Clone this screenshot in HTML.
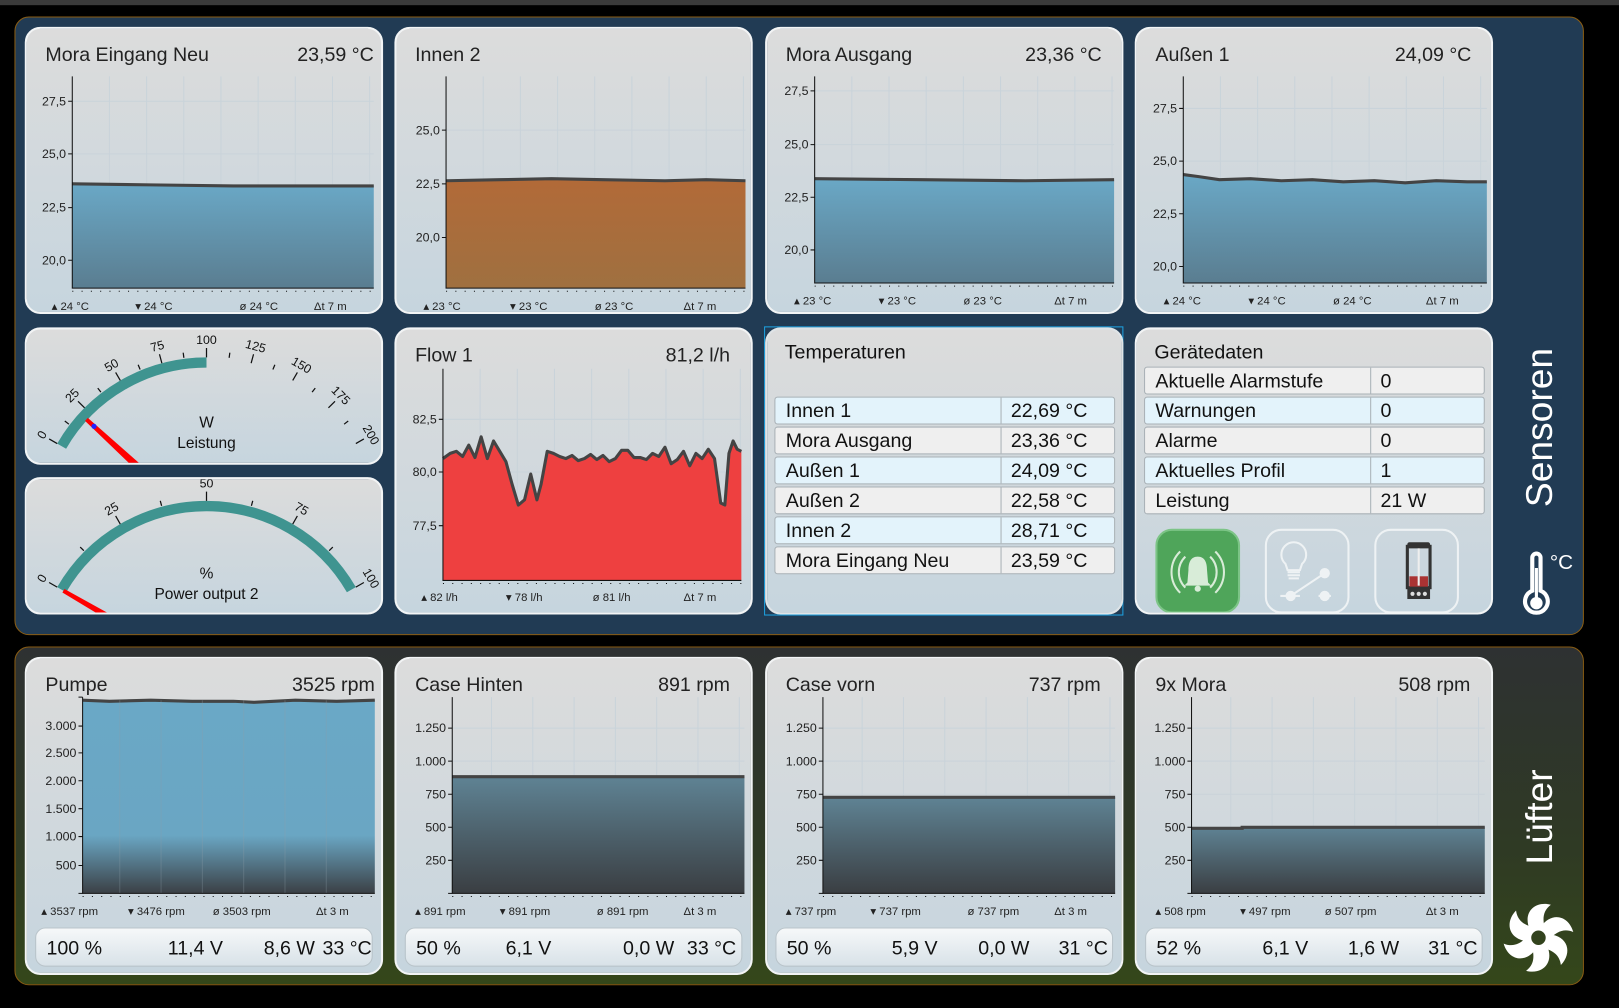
<!DOCTYPE html>
<html><head><meta charset="utf-8"><style>
html,body{margin:0;padding:0;background:#000;width:1619px;height:1008px;overflow:hidden}
#w{position:absolute;left:0;top:0;width:1568px;height:976px;transform:scale(1.03253,1.03279);transform-origin:0 0;font-family:"Liberation Sans",sans-serif;color:#111}
.topbar{position:absolute;left:0;top:0;width:1568px;height:5px;background:#3a3a3a}
.panel{position:absolute;left:14px;width:1518px;border:1px solid #8a5d14;border-radius:14px}
.card{position:absolute;width:343px;height:274px;border:2px solid #f2f4f5;border-radius:15px;background:linear-gradient(#dcdcdc,#c6d5de);overflow:hidden}
.card.lf{height:304px}
.card svg{position:absolute;left:0;top:0}
.t{position:absolute;font-size:19px;top:12px}
.bar{position:absolute;left:8px;top:260px;width:325px;height:36px;border:1px solid #b9c4ca;border-radius:10px;background:linear-gradient(#f6f8f9,#d8e2e8)}
.tbl{position:absolute;font-size:19px}
.row{position:absolute;height:27px;border:1px solid #a9b1b6;border-radius:3px;box-sizing:border-box}
.row span{position:absolute;top:3px}
.row i{position:absolute;top:0;bottom:0;width:1px;background:#a9b1b6}
.btn{position:absolute;top:193px;width:82px;height:82px;border:2px solid #eef2f4;border-radius:16px;box-sizing:border-box}
.vt{position:absolute;color:#fff;font-size:36px;transform:rotate(-90deg);transform-origin:center;white-space:nowrap}
</style></head><body><div id="w">
<div class="topbar"></div>
<div class="panel" style="top:16px;height:597px;background:#213b54"></div>
<div class="panel" style="top:626px;height:326px;background:linear-gradient(#2e3132,#2f3a24 60%,#34471a)"></div>

<svg width="0" height="0" style="position:absolute"><defs>
<linearGradient id="gb" x1="0" y1="0" x2="0" y2="1"><stop offset="0" stop-color="#6aa8c6"/><stop offset="1" stop-color="#5a7d90"/></linearGradient>
<linearGradient id="gbr" x1="0" y1="0" x2="0" y2="1"><stop offset="0" stop-color="#b26a38"/><stop offset="1" stop-color="#9f7040"/></linearGradient>
<linearGradient id="gp" x1="0" y1="0" x2="0" y2="1"><stop offset="0" stop-color="#6aa8c6"/><stop offset="0.7" stop-color="#6aa6c3"/><stop offset="1" stop-color="#3b4045"/></linearGradient>
<linearGradient id="gd" x1="0" y1="0" x2="0" y2="1"><stop offset="0" stop-color="#5f8394"/><stop offset="1" stop-color="#3a3e42"/></linearGradient>
</defs></svg>

<div class="card" style="left:24px;top:26px">
<svg width="347" height="278" font-size="12" fill="#222">
<g stroke="#c9d3da" stroke-width="1"><path d="M80 46V251M116 46V251M152 46V251M188 46V251M224 46V251M260 46V251M296 46V251M332 46V251M44 70H336M44 121H336M44 173H336M44 224H336"/></g>
<path d="M44 150L120 151L200 152L336 152L336 251L44 251Z" fill="url(#gb)"/>
<path d="M44 150L120 151L200 152L336 152" stroke="#444" stroke-width="3" fill="none"/>
<path d="M44 46V251H336" stroke="#111" fill="none"/><path d="M44 254H336" stroke="#111" stroke-dasharray="1 8"/>
<g stroke="#111"><path d="M40 70H44M40 121H44M40 173H44M40 224H44"/></g>
<text x="38" y="74" text-anchor="end">27,5</text><text x="38" y="125" text-anchor="end">25,0</text><text x="38" y="177" text-anchor="end">22,5</text><text x="38" y="228" text-anchor="end">20,0</text>
<text x="24" y="272" font-size="11">▴ 24 °C</text><text x="105" y="272" font-size="11">▾ 24 °C</text><text x="206" y="272" font-size="11">ø 24 °C</text><text x="278" y="272" font-size="11">Δt 7 m</text>
<text x="18" y="31" font-size="19">Mora Eingang Neu</text><text x="336" y="31" font-size="19" text-anchor="end">23,59 °C</text>
</svg></div>

<div class="card" style="left:382px;top:26px">
<svg width="347" height="278" font-size="12" fill="#222">
<g stroke="#c9d3da"><path d="M84 46V251M120 46V251M156 46V251M192 46V251M228 46V251M264 46V251M300 46V251M336 46V251M48 98H338M48 150H338M48 202H338"/></g>
<path d="M48 147L100 146L150 145L200 146L260 147L300 146L338 147L338 251L48 251Z" fill="url(#gbr)"/>
<path d="M48 147L100 146L150 145L200 146L260 147L300 146L338 147" stroke="#444" stroke-width="3" fill="none"/>
<path d="M48 46V251H338" stroke="#111" fill="none"/><path d="M48 254H338" stroke="#111" stroke-dasharray="1 8"/>
<g stroke="#111"><path d="M44 98H48M44 150H48M44 202H48"/></g>
<text x="42" y="102" text-anchor="end">25,0</text><text x="42" y="154" text-anchor="end">22,5</text><text x="42" y="206" text-anchor="end">20,0</text>
<text x="26" y="272" font-size="11">▴ 23 °C</text><text x="110" y="272" font-size="11">▾ 23 °C</text><text x="192" y="272" font-size="11">ø 23 °C</text><text x="278" y="272" font-size="11">Δt 7 m</text>
<text x="18" y="31" font-size="19">Innen 2</text>
</svg></div>

<div class="card" style="left:741px;top:26px">
<svg width="347" height="278" font-size="12" fill="#222">
<g stroke="#c9d3da"><path d="M82 46V246M118 46V246M154 46V246M190 46V246M226 46V246M262 46V246M298 46V246M334 46V246M46 60H336M46 112H336M46 163H336M46 214H336"/></g>
<path d="M46 145L150 146L250 147L336 146L336 246L46 246Z" fill="url(#gb)"/>
<path d="M46 145L150 146L250 147L336 146" stroke="#444" stroke-width="3" fill="none"/>
<path d="M46 46V246H336" stroke="#111" fill="none"/><path d="M46 249H336" stroke="#111" stroke-dasharray="1 8"/>
<g stroke="#111"><path d="M42 60H46M42 112H46M42 163H46M42 214H46"/></g>
<text x="40" y="64" text-anchor="end">27,5</text><text x="40" y="116" text-anchor="end">25,0</text><text x="40" y="167" text-anchor="end">22,5</text><text x="40" y="218" text-anchor="end">20,0</text>
<text x="26" y="267" font-size="11">▴ 23 °C</text><text x="108" y="267" font-size="11">▾ 23 °C</text><text x="190" y="267" font-size="11">ø 23 °C</text><text x="278" y="267" font-size="11">Δt 7 m</text>
<text x="18" y="31" font-size="19">Mora Ausgang</text><text x="324" y="31" font-size="19" text-anchor="end">23,36 °C</text>
</svg></div>

<div class="card" style="left:1099px;top:26px">
<svg width="347" height="278" font-size="12" fill="#222">
<g stroke="#c9d3da"><path d="M81 46V246M117 46V246M153 46V246M189 46V246M225 46V246M261 46V246M297 46V246M333 46V246M45 77H339M45 128H339M45 179H339M45 230H339"/></g>
<path d="M45 141L60 143L80 146L110 145L140 147L170 146L200 148L230 147L260 149L290 147L320 148L339 148L339 246L45 246Z" fill="url(#gb)"/>
<path d="M45 141L60 143L80 146L110 145L140 147L170 146L200 148L230 147L260 149L290 147L320 148L339 148" stroke="#444" stroke-width="3" fill="none"/>
<path d="M45 46V246H339" stroke="#111" fill="none"/><path d="M45 249H339" stroke="#111" stroke-dasharray="1 8"/>
<g stroke="#111"><path d="M41 77H45M41 128H45M41 179H45M41 230H45"/></g>
<text x="39" y="81" text-anchor="end">27,5</text><text x="39" y="132" text-anchor="end">25,0</text><text x="39" y="183" text-anchor="end">22,5</text><text x="39" y="234" text-anchor="end">20,0</text>
<text x="26" y="267" font-size="11">▴ 24 °C</text><text x="108" y="267" font-size="11">▾ 24 °C</text><text x="190" y="267" font-size="11">ø 24 °C</text><text x="280" y="267" font-size="11">Δt 7 m</text>
<text x="18" y="31" font-size="19">Außen 1</text><text x="324" y="31" font-size="19" text-anchor="end">24,09 °C</text>
</svg></div>

<div class="card" style="left:24px;top:317px;height:129px">
<svg width="347" height="133" fill="#111" font-size="12">
<path d="M33.7 113A162 162 0 0 1 174 32" stroke="#3f9490" stroke-width="10" fill="none"/>
<g stroke="#111" stroke-width="1.2">
<line x1="174" y1="27" x2="174" y2="18" transform="rotate(-60 174 194)"/><line x1="174" y1="27" x2="174" y2="18" transform="rotate(-45 174 194)"/><line x1="174" y1="27" x2="174" y2="18" transform="rotate(-30 174 194)"/><line x1="174" y1="27" x2="174" y2="18" transform="rotate(-15 174 194)"/><line x1="174" y1="27" x2="174" y2="18"/><line x1="174" y1="27" x2="174" y2="18" transform="rotate(15 174 194)"/><line x1="174" y1="27" x2="174" y2="18" transform="rotate(30 174 194)"/><line x1="174" y1="27" x2="174" y2="18" transform="rotate(45 174 194)"/><line x1="174" y1="27" x2="174" y2="18" transform="rotate(60 174 194)"/>
<line x1="174" y1="26" x2="174" y2="21" transform="rotate(-52.5 174 194)"/><line x1="174" y1="26" x2="174" y2="21" transform="rotate(-37.5 174 194)"/><line x1="174" y1="26" x2="174" y2="21" transform="rotate(-22.5 174 194)"/><line x1="174" y1="26" x2="174" y2="21" transform="rotate(-7.5 174 194)"/><line x1="174" y1="26" x2="174" y2="21" transform="rotate(7.5 174 194)"/><line x1="174" y1="26" x2="174" y2="21" transform="rotate(22.5 174 194)"/><line x1="174" y1="26" x2="174" y2="21" transform="rotate(37.5 174 194)"/><line x1="174" y1="26" x2="174" y2="21" transform="rotate(52.5 174 194)"/>
</g>
<g text-anchor="middle">
<text x="174" y="14" transform="rotate(-60 174 194)">0</text><text x="174" y="14" transform="rotate(-45 174 194)">25</text><text x="174" y="14" transform="rotate(-30 174 194)">50</text><text x="174" y="14" transform="rotate(-15 174 194)">75</text><text x="174" y="14">100</text><text x="174" y="14" transform="rotate(15 174 194)">125</text><text x="174" y="14" transform="rotate(30 174 194)">150</text><text x="174" y="14" transform="rotate(45 174 194)">175</text><text x="174" y="14" transform="rotate(60 174 194)">200</text>
</g>
<polygon points="172,36 176,36 178,130 170,130" fill="#f00" transform="rotate(-47.4 174 194)"/>
<circle cx="174" cy="46" r="2.5" fill="#22f" transform="rotate(-47.4 174 194)"/>
<text x="174" y="95" text-anchor="middle" font-size="15">W</text><text x="174" y="115" text-anchor="middle" font-size="15">Leistung</text>
</svg></div>

<div class="card" style="left:24px;top:462px;height:129px">
<svg width="347" height="133" fill="#111" font-size="12">
<path d="M33.7 107A162 162 0 0 1 314.3 107" stroke="#3f9490" stroke-width="10" fill="none"/>
<g stroke="#111" stroke-width="1.2">
<line x1="174" y1="21" x2="174" y2="12" transform="rotate(-60 174 188)"/><line x1="174" y1="21" x2="174" y2="12" transform="rotate(-30 174 188)"/><line x1="174" y1="21" x2="174" y2="12"/><line x1="174" y1="21" x2="174" y2="12" transform="rotate(30 174 188)"/><line x1="174" y1="21" x2="174" y2="12" transform="rotate(60 174 188)"/>
<line x1="174" y1="20" x2="174" y2="15" transform="rotate(-45 174 188)"/><line x1="174" y1="20" x2="174" y2="15" transform="rotate(-15 174 188)"/><line x1="174" y1="20" x2="174" y2="15" transform="rotate(15 174 188)"/><line x1="174" y1="20" x2="174" y2="15" transform="rotate(45 174 188)"/>
</g>
<g text-anchor="middle">
<text x="174" y="8" transform="rotate(-60 174 188)">0</text><text x="174" y="8" transform="rotate(-30 174 188)">25</text><text x="174" y="8">50</text><text x="174" y="8" transform="rotate(30 174 188)">75</text><text x="174" y="8" transform="rotate(60 174 188)">100</text>
</g>
<polygon points="172,28 176,28 178,140 170,140" fill="#f00" transform="rotate(-60 174 188)"/>
<text x="174" y="96" text-anchor="middle" font-size="15">%</text><text x="174" y="116" text-anchor="middle" font-size="15">Power output 2</text>
</svg></div>

<div class="card" style="left:382px;top:317px">
<svg width="347" height="278" font-size="12" fill="#222">
<g stroke="#c9d3da"><path d="M81 38V243M117 38V243M153 38V243M189 38V243M225 38V243M261 38V243M297 38V243M333 38V243M45 87H334M45 138H334M45 190H334"/></g>
<path d="M45 125L52 120L58 118L64 123L70 112L76 124L82 104L88 125L94 108L100 118L106 128L112 150L118 170L124 165L130 140L136 165L140 150L146 118L152 120L158 123L164 125L170 122L176 127L182 125L188 121L194 126L200 122L206 128L212 125L218 117L224 117L230 124L236 124L242 126L248 120L254 123L260 114L266 130L272 126L278 118L284 132L290 120L296 125L302 116L308 125L314 168L318 170L322 120L326 108L330 116L334 118L334 243L45 243Z" fill="#ee4040"/>
<path d="M45 125L52 120L58 118L64 123L70 112L76 124L82 104L88 125L94 108L100 118L106 128L112 150L118 170L124 165L130 140L136 165L140 150L146 118L152 120L158 123L164 125L170 122L176 127L182 125L188 121L194 126L200 122L206 128L212 125L218 117L224 117L230 124L236 124L242 126L248 120L254 123L260 114L266 130L272 126L278 118L284 132L290 120L296 125L302 116L308 125L314 168L318 170L322 120L326 108L330 116L334 118" stroke="#444" stroke-width="3" fill="none" stroke-linejoin="round"/>
<path d="M45 38V243H334" stroke="#111" fill="none"/><path d="M45 246H334" stroke="#111" stroke-dasharray="1 8"/>
<g stroke="#111"><path d="M41 87H45M41 138H45M41 190H45"/></g>
<text x="39" y="91" text-anchor="end">82,5</text><text x="39" y="142" text-anchor="end">80,0</text><text x="39" y="194" text-anchor="end">77,5</text>
<text x="24" y="263" font-size="11">▴ 82 l/h</text><text x="106" y="263" font-size="11">▾ 78 l/h</text><text x="190" y="263" font-size="11">ø 81 l/h</text><text x="278" y="263" font-size="11">Δt 7 m</text>
<text x="18" y="31" font-size="19">Flow 1</text><text x="323" y="31" font-size="19" text-anchor="end">81,2 l/h</text>
</svg></div>

<div style="position:absolute;left:740px;top:316px;width:346px;height:278px;border:1px solid #1da1e0"></div>
<div class="card" style="left:741px;top:317px;border-color:#dfe4e7">
<div class="t" style="left:17px">Temperaturen</div>
<div class="tbl">
<div class="row" style="left:7px;top:65px;width:330px;background:#e3f3fb"><span style="left:10px">Innen 1</span><i style="left:218px"></i><span style="left:228px">22,69 °C</span></div>
<div class="row" style="left:7px;top:94px;width:330px;background:#efefef"><span style="left:10px">Mora Ausgang</span><i style="left:218px"></i><span style="left:228px">23,36 °C</span></div>
<div class="row" style="left:7px;top:123px;width:330px;background:#e3f3fb"><span style="left:10px">Außen 1</span><i style="left:218px"></i><span style="left:228px">24,09 °C</span></div>
<div class="row" style="left:7px;top:152px;width:330px;background:#efefef"><span style="left:10px">Außen 2</span><i style="left:218px"></i><span style="left:228px">22,58 °C</span></div>
<div class="row" style="left:7px;top:181px;width:330px;background:#e3f3fb"><span style="left:10px">Innen 2</span><i style="left:218px"></i><span style="left:228px">28,71 °C</span></div>
<div class="row" style="left:7px;top:210px;width:330px;background:#efefef"><span style="left:10px">Mora Eingang Neu</span><i style="left:218px"></i><span style="left:228px">23,59 °C</span></div>
</div></div>

<div class="card" style="left:1099px;top:317px">
<div class="t" style="left:17px">Gerätedaten</div>
<div class="tbl">
<div class="row" style="left:7px;top:36px;width:330px;background:#efefef"><span style="left:10px">Aktuelle Alarmstufe</span><i style="left:218px"></i><span style="left:228px">0</span></div>
<div class="row" style="left:7px;top:65px;width:330px;background:#e3f3fb"><span style="left:10px">Warnungen</span><i style="left:218px"></i><span style="left:228px">0</span></div>
<div class="row" style="left:7px;top:94px;width:330px;background:#efefef"><span style="left:10px">Alarme</span><i style="left:218px"></i><span style="left:228px">0</span></div>
<div class="row" style="left:7px;top:123px;width:330px;background:#e3f3fb"><span style="left:10px">Aktuelles Profil</span><i style="left:218px"></i><span style="left:228px">1</span></div>
<div class="row" style="left:7px;top:152px;width:330px;background:#efefef"><span style="left:10px">Leistung</span><i style="left:218px"></i><span style="left:228px">21 W</span></div>
</div>
<div class="btn" style="left:18px;background:#4fa55a;border-color:#7cc486">
<svg width="82" height="82" style="left:-2px;top:-2px"><g fill="none" stroke="#d8ecd8" stroke-width="2"><path d="M24 22A28 28 0 0 0 24 62M58 22A28 28 0 0 1 58 62M29 27A21 21 0 0 0 29 57M53 27A21 21 0 0 1 53 57"/></g><path d="M41 27C34 27 32 33 32 40L31 52L28 55H54L51 52L50 40C50 33 48 27 41 27Z" fill="#d8ecd8"/><circle cx="41" cy="58" r="3" fill="#d8ecd8"/></svg></div>
<div class="btn" style="left:124px">
<svg width="82" height="82" style="left:-2px;top:-2px" fill="none" stroke="#eef2f4" stroke-width="2"><path d="M20 34A12 12 0 1 1 36 34L34 40H22Z"/><path d="M22 42H34M22 45H34M23 48H33"/><path d="M25 65L58 43M15 65H34M52 65H64"/><circle cx="25" cy="65" r="4" fill="#eef2f4"/><circle cx="58" cy="43" r="4" fill="#eef2f4"/><circle cx="58" cy="65" r="4" fill="#eef2f4"/></svg></div>
<div class="btn" style="left:230px">
<svg width="82" height="82" style="left:-2px;top:-2px"><rect x="32" y="13" width="22" height="6" rx="2" fill="#333"/><rect x="32" y="17" width="22" height="40" fill="none" stroke="#333" stroke-width="3"/><rect x="34" y="46" width="18" height="10" fill="#a33"/><line x1="43" y1="19" x2="43" y2="55" stroke="#eee" stroke-width="2"/><rect x="32" y="58" width="22" height="10" fill="#333"/><circle cx="37" cy="63" r="2" fill="#ddd"/><circle cx="43" cy="63" r="2" fill="#ddd"/><circle cx="49" cy="63" r="2" fill="#ddd"/></svg></div>
</div>

<div class="vt" style="left:1421px;top:400px;width:140px;text-align:center">Sensoren</div>
<svg width="60" height="80" style="position:absolute;left:1465px;top:530px"><path d="M19 10A4 4 0 0 1 27 10V42A11 11 0 1 1 19 42Z" fill="none" stroke="#fff" stroke-width="4"/><line x1="23" y1="20" x2="23" y2="50" stroke="#fff" stroke-width="3"/><circle cx="23" cy="54" r="6" fill="#fff"/><text x="36" y="21" fill="#fff" font-size="20" font-family="Liberation Sans,sans-serif">°C</text></svg>
<div class="vt" style="left:1441px;top:770px;width:100px;text-align:center">Lüfter</div>
<svg width="80" height="80" style="position:absolute;left:1450px;top:868px"><g fill="#fff" transform="translate(40 40)">
<path d="M-8 -7C-16 -24 -4 -36 12 -32C4 -26 4 -18 6 -10Z"/>
<path d="M-8 -7C-16 -24 -4 -36 12 -32C4 -26 4 -18 6 -10Z" transform="rotate(60)"/>
<path d="M-8 -7C-16 -24 -4 -36 12 -32C4 -26 4 -18 6 -10Z" transform="rotate(120)"/>
<path d="M-8 -7C-16 -24 -4 -36 12 -32C4 -26 4 -18 6 -10Z" transform="rotate(180)"/>
<path d="M-8 -7C-16 -24 -4 -36 12 -32C4 -26 4 -18 6 -10Z" transform="rotate(240)"/>
<path d="M-8 -7C-16 -24 -4 -36 12 -32C4 -26 4 -18 6 -10Z" transform="rotate(300)"/>
<circle r="9" fill="none" stroke="#fff" stroke-width="4"/></g></svg>

<div class="card lf" style="left:24px;top:636px">
<svg width="347" height="308" font-size="12" fill="#222">
<path d="M54 40L80 41L120 40L160 41L200 41L220 42L260 40L300 41L337 40L337 227L54 227Z" fill="url(#gp)"/>
<path d="M54 40L80 41L120 40L160 41L200 41L220 42L260 40L300 41L337 40" stroke="#444" stroke-width="3" fill="none"/>
<g stroke="#8fa0aa" stroke-opacity=".3"><path d="M90 40V227M130 40V227M170 40V227M210 40V227M250 40V227M290 40V227"/></g>
<path d="M54 37V227H337" stroke="#111" fill="none"/><path d="M54 230H337" stroke="#111" stroke-dasharray="1 8"/>
<g stroke="#111"><path d="M50 65H54M50 91H54M50 118H54M50 145H54M50 172H54M50 200H54M50 227H54M50 37H54"/></g>
<text x="48" y="69" text-anchor="end">3.000</text><text x="48" y="95" text-anchor="end">2.500</text><text x="48" y="122" text-anchor="end">2.000</text><text x="48" y="149" text-anchor="end">1.500</text><text x="48" y="176" text-anchor="end">1.000</text><text x="48" y="204" text-anchor="end">500</text>
<text x="14" y="248" font-size="11">▴ 3537 rpm</text><text x="98" y="248" font-size="11">▾ 3476 rpm</text><text x="180" y="248" font-size="11">ø 3503 rpm</text><text x="280" y="248" font-size="11">Δt 3 m</text>
<text x="18" y="31" font-size="19">Pumpe</text><text x="337" y="31" font-size="19" text-anchor="end">3525 rpm</text>
</svg>
<div class="bar"><svg width="325" height="36" font-size="19" fill="#111"><text x="10" y="25">100 %</text><text x="181" y="25" text-anchor="end">11,4 V</text><text x="270" y="25" text-anchor="end">8,6 W</text><text x="325" y="25" text-anchor="end">33 °C</text></svg></div>
</div>

<div class="card lf" style="left:382px;top:636px">
<svg width="347" height="308" font-size="12" fill="#222">
<g stroke="#c9d3da"><path d="M92 37V227M132 37V227M172 37V227M212 37V227M252 37V227M292 37V227M332 37V227M54 67H337M54 99H337M54 131H337M54 163H337M54 195H337"/></g>
<path d="M54 114H337V227H54Z" fill="url(#gd)"/><path d="M54 114H337" stroke="#444" stroke-width="3"/>
<path d="M54 37V227H337" stroke="#111" fill="none"/><path d="M54 230H337" stroke="#111" stroke-dasharray="1 8"/>
<g stroke="#111"><path d="M50 67H54M50 99H54M50 131H54M50 163H54M50 195H54M50 227H54"/></g>
<text x="48" y="71" text-anchor="end">1.250</text><text x="48" y="103" text-anchor="end">1.000</text><text x="48" y="135" text-anchor="end">750</text><text x="48" y="167" text-anchor="end">500</text><text x="48" y="199" text-anchor="end">250</text>
<text x="18" y="248" font-size="11">▴ 891 rpm</text><text x="100" y="248" font-size="11">▾ 891 rpm</text><text x="194" y="248" font-size="11">ø 891 rpm</text><text x="278" y="248" font-size="11">Δt 3 m</text>
<text x="18" y="31" font-size="19">Case Hinten</text><text x="323" y="31" font-size="19" text-anchor="end">891 rpm</text>
</svg>
<div class="bar"><svg width="325" height="36" font-size="19" fill="#111"><text x="10" y="25">50 %</text><text x="141" y="25" text-anchor="end">6,1 V</text><text x="260" y="25" text-anchor="end">0,0 W</text><text x="320" y="25" text-anchor="end">33 °C</text></svg></div>
</div>

<div class="card lf" style="left:741px;top:636px">
<svg width="347" height="308" font-size="12" fill="#222">
<g stroke="#c9d3da"><path d="M92 37V227M132 37V227M172 37V227M212 37V227M252 37V227M292 37V227M332 37V227M54 67H337M54 99H337M54 131H337M54 163H337M54 195H337"/></g>
<path d="M54 134H337V227H54Z" fill="url(#gd)"/><path d="M54 134H337" stroke="#444" stroke-width="3"/>
<path d="M54 37V227H337" stroke="#111" fill="none"/><path d="M54 230H337" stroke="#111" stroke-dasharray="1 8"/>
<g stroke="#111"><path d="M50 67H54M50 99H54M50 131H54M50 163H54M50 195H54M50 227H54"/></g>
<text x="48" y="71" text-anchor="end">1.250</text><text x="48" y="103" text-anchor="end">1.000</text><text x="48" y="135" text-anchor="end">750</text><text x="48" y="167" text-anchor="end">500</text><text x="48" y="199" text-anchor="end">250</text>
<text x="18" y="248" font-size="11">▴ 737 rpm</text><text x="100" y="248" font-size="11">▾ 737 rpm</text><text x="194" y="248" font-size="11">ø 737 rpm</text><text x="278" y="248" font-size="11">Δt 3 m</text>
<text x="18" y="31" font-size="19">Case vorn</text><text x="323" y="31" font-size="19" text-anchor="end">737 rpm</text>
</svg>
<div class="bar"><svg width="325" height="36" font-size="19" fill="#111"><text x="10" y="25">50 %</text><text x="156" y="25" text-anchor="end">5,9 V</text><text x="245" y="25" text-anchor="end">0,0 W</text><text x="321" y="25" text-anchor="end">31 °C</text></svg></div>
</div>

<div class="card lf" style="left:1099px;top:636px">
<svg width="347" height="308" font-size="12" fill="#222">
<g stroke="#c9d3da"><path d="M91 37V227M131 37V227M171 37V227M211 37V227M251 37V227M291 37V227M331 37V227M53 67H337M53 99H337M53 131H337M53 163H337M53 195H337"/></g>
<path d="M53 164H102V163H337V227H53Z" fill="url(#gd)"/><path d="M53 164H102V163H337" stroke="#444" stroke-width="3" fill="none"/>
<path d="M53 37V227H337" stroke="#111" fill="none"/><path d="M53 230H337" stroke="#111" stroke-dasharray="1 8"/>
<g stroke="#111"><path d="M49 67H53M49 99H53M49 131H53M49 163H53M49 195H53M49 227H53"/></g>
<text x="47" y="71" text-anchor="end">1.250</text><text x="47" y="103" text-anchor="end">1.000</text><text x="47" y="135" text-anchor="end">750</text><text x="47" y="167" text-anchor="end">500</text><text x="47" y="199" text-anchor="end">250</text>
<text x="18" y="248" font-size="11">▴ 508 rpm</text><text x="100" y="248" font-size="11">▾ 497 rpm</text><text x="182" y="248" font-size="11">ø 507 rpm</text><text x="280" y="248" font-size="11">Δt 3 m</text>
<text x="18" y="31" font-size="19">9x Mora</text><text x="323" y="31" font-size="19" text-anchor="end">508 rpm</text>
</svg>
<div class="bar"><svg width="325" height="36" font-size="19" fill="#111"><text x="10" y="25">52 %</text><text x="157" y="25" text-anchor="end">6,1 V</text><text x="245" y="25" text-anchor="end">1,6 W</text><text x="321" y="25" text-anchor="end">31 °C</text></svg></div>
</div>

</div></body></html>
